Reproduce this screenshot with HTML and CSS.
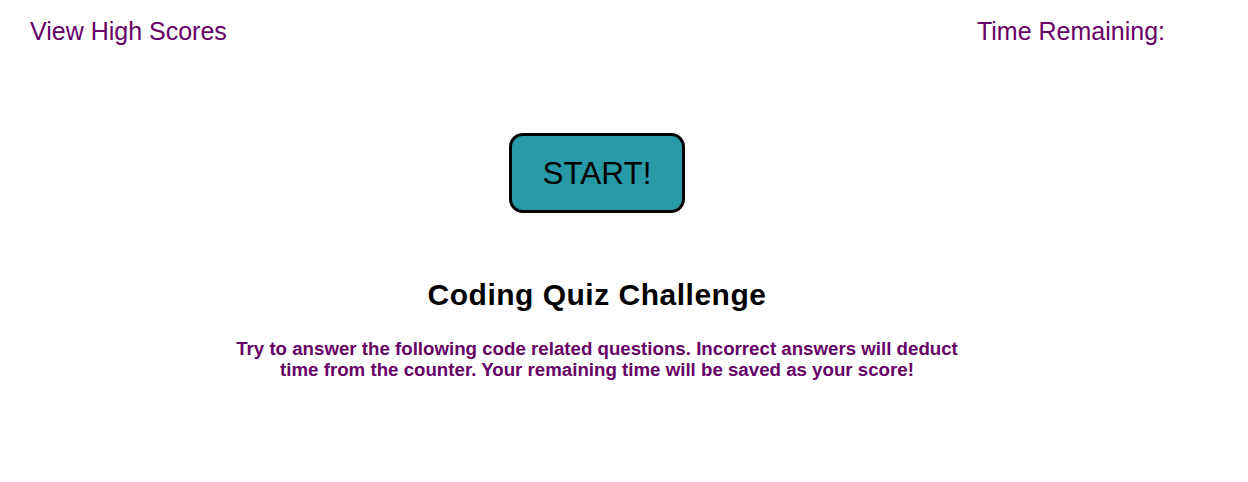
FILE: index.html
```html
<!DOCTYPE html>
<html>
<head>
<meta charset="utf-8">
<link rel="stylesheet" href="styles.css">
</head>
<body>
<header class="top">
  <a class="scores" href="#">View High Scores</a>
  <div class="timer">Time Remaining: <span class="time"></span></div>
</header>
<main class="quiz">
  <button class="start">START!</button>
  <h1 class="title">Coding Quiz Challenge</h1>
  <p class="intro">Try to answer the following code related questions. Incorrect answers will deduct time from the counter. Your remaining time will be saved as your score!</p>
</main>
</body>
</html>
```
FILE: styles.css
```css
html, body {
  margin: 0;
  padding: 0;
  background: #fff;
  font-family: "Liberation Sans", Arial, sans-serif;
}
.top {
  display: flex;
  justify-content: space-between;
  padding: 16px 83px 0 30px;
  height: 41px;
}
.scores, .timer {
  color: #660066;
  font-size: 25px;
  text-decoration: none;
  line-height: 30px;
}
.quiz {
  width: 1194px;
  display: flex;
  flex-direction: column;
  align-items: center;
}
.start {
  margin-top: 76px;
  width: 176px;
  height: 80px;
  background: #2899a6;
  border: 3px solid #000;
  border-radius: 14px;
  font-family: "Liberation Sans", Arial, sans-serif;
  font-size: 31.5px;
  color: #000;
  padding: 0;
}
.title {
  margin: 65px 0 0;
  font-size: 30px;
  letter-spacing: 0.5px;
  line-height: 34px;
  font-weight: bold;
  color: #000;
}
.intro {
  margin: 26px 0 0;
  width: 730px;
  text-align: center;
  font-size: 18.7px;
  line-height: 21px;
  font-weight: bold;
  color: #660066;
}
```
